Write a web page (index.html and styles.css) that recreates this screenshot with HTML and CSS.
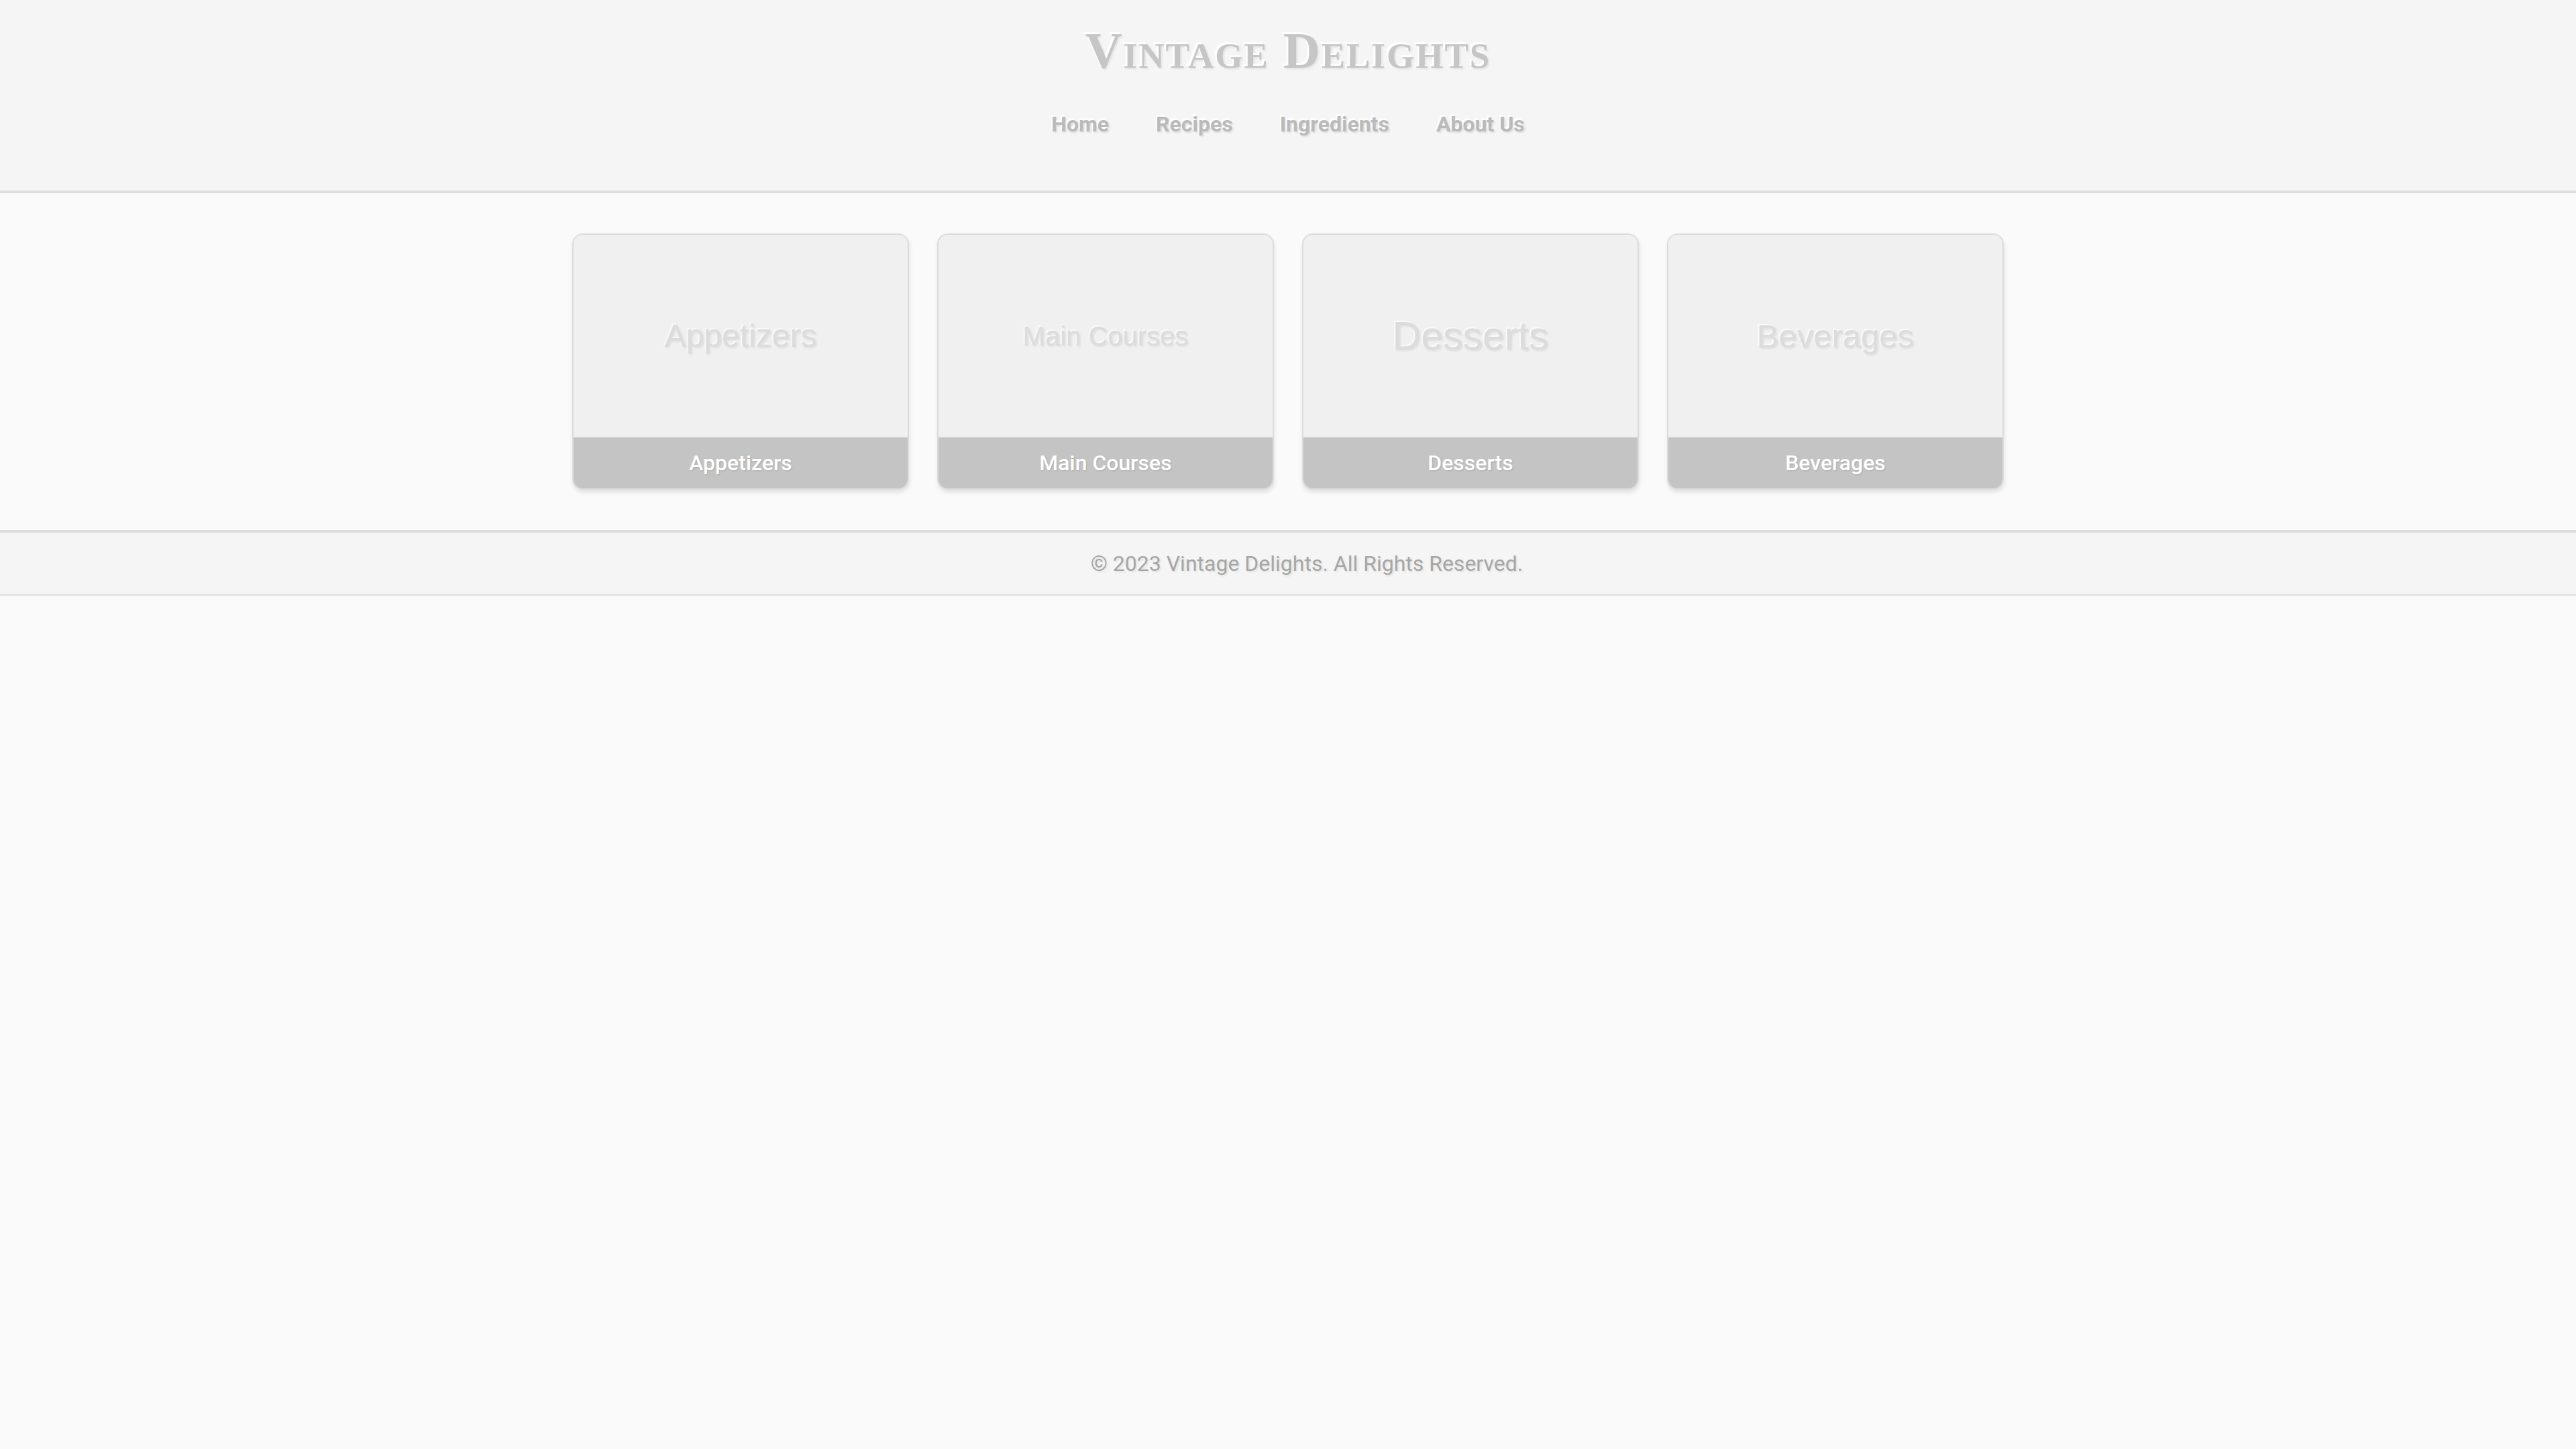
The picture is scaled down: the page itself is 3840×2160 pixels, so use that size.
FILE: index.html
```html
<!DOCTYPE html>
<html lang="en">
<head>
<meta charset="utf-8">
<title>Vintage Delights</title>
<link rel="stylesheet" href="styles.css">
</head>
<body>
<header class="site-header">
  <h1 class="site-title">Vintage Delights</h1>
  <nav class="site-nav">
    <a class="nav-link" href="#">Home</a>
    <a class="nav-link" href="#">Recipes</a>
    <a class="nav-link" href="#">Ingredients</a>
    <a class="nav-link" href="#">About Us</a>
  </nav>
</header>
<main class="content">
  <section class="card-grid">
    <article class="card">
      <div class="card-image"><span class="ph ph-48">Appetizers</span></div>
      <div class="card-label">Appetizers</div>
    </article>
    <article class="card">
      <div class="card-image"><span class="ph ph-40">Main Courses</span></div>
      <div class="card-label">Main Courses</div>
    </article>
    <article class="card">
      <div class="card-image"><span class="ph ph-59">Desserts</span></div>
      <div class="card-label">Desserts</div>
    </article>
    <article class="card">
      <div class="card-image"><span class="ph ph-49">Beverages</span></div>
      <div class="card-label">Beverages</div>
    </article>
  </section>
</main>
<footer class="site-footer">
  <p class="copyright">&copy; 2023 Vintage Delights. All Rights Reserved.</p>
</footer>
</body>
</html>
```
FILE: styles.css
```css
*, *::before, *::after {
  box-sizing: border-box;
}

html, body {
  margin: 0;
  padding: 0;
  background: #fafafa;
}

body {
  font-family: Roboto, "Liberation Sans", sans-serif;
  color: #9e9e9e;
}

.site-header {
  background: #f5f5f5;
  border-bottom: 4px solid #dedede;
  padding: 32px 0 80px;
  text-align: center;
}

.site-title {
  margin: 0;
  font-family: "Liberation Serif", "DejaVu Serif", serif;
  font-weight: 700;
  font-size: 76px;
  line-height: normal;
  font-variant: small-caps;
  letter-spacing: 2px;
  color: #c6c6c6;
  text-shadow: -3px -3px 0 rgba(255,255,255,0.9), 2px 2px 3px rgba(0,0,0,0.08);
}

.site-nav {
  margin-top: 47px;
  display: flex;
  justify-content: center;
  gap: 70px;
}

.nav-link {
  font-family: Roboto, "Liberation Sans", sans-serif;
  font-size: 32px;
  font-weight: 700;
  line-height: normal;
  color: #bababa;
  text-decoration: none;
  text-shadow: -2px -3px 0 rgba(255,255,255,0.9), 2px 2px 3px rgba(0,0,0,0.1);
}

.content {
  padding: 60px 0 60px;
}

.card-grid {
  display: flex;
  justify-content: center;
  gap: 42px;
}

.card {
  width: 502px;
  border: 2px solid #dcdcdc;
  border-radius: 16px;
  overflow: hidden;
  background: #f0f0f0;
  box-shadow: 1px 4px 6px rgba(0,0,0,0.1);
  display: flex;
  flex-direction: column;
}

.card-image {
  height: 302px;
  background: #f0f0f0;
  display: flex;
  align-items: center;
  justify-content: center;
}

.ph {
  font-family: "Liberation Sans", Arial, sans-serif;
  color: #dcdcdc;
  text-shadow: 2px 2px 3px rgba(0,0,0,0.08), -2px -2px 0 rgba(255,255,255,0.6);
  line-height: 1;
}

.ph-48 { font-size: 48px; }
.ph-40 { font-size: 40px; }
.ph-59 { font-size: 59px; }
.ph-49 { font-size: 49px; }

.card-label {
  background: #c4c4c4;
  color: #ffffff;
  font-family: Roboto, "Liberation Sans", sans-serif;
  font-size: 32px;
  font-weight: 500;
  line-height: 48px;
  padding: 14px 0;
  text-align: center;
  text-shadow: 1px 1px 2px rgba(0,0,0,0.15);
}

.site-footer {
  background: #f5f5f5;
  border-top: 4px solid #dedede;
  border-bottom: 2px solid #dedede;
  box-shadow: 0 4px 0 #f4f4f4;
  padding: 22px 0 22px 56px;
  text-align: center;
}

.copyright {
  margin: 0;
  font-family: Roboto, "Liberation Sans", sans-serif;
  font-size: 32px;
  line-height: 48px;
  color: #a6a6a6;
  text-shadow: 2px 2px 3px rgba(0,0,0,0.08);
}
```
